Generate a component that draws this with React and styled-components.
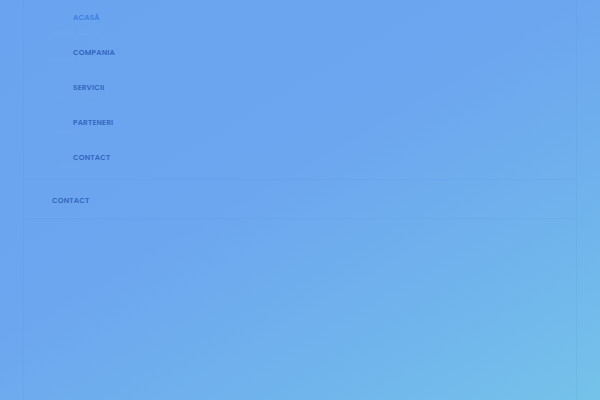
import React from "react";
import styled, { createGlobalStyle } from "styled-components";

const Global = createGlobalStyle`
  html, body { margin: 0; padding: 0; }
  body {
    width: 600px;
    height: 400px;
    overflow: hidden;
    background: linear-gradient(150deg, #6aa3ef 0%, #6ca6ef 45%, #70b4ec 75%, #74c2ea 100%);
    font-family: "Poppins", "Inter", "Open Sans", sans-serif;
  }
`;

const Page = styled.div`
  width: 600px;
  height: 400px;
  padding: 0 23px;
  box-sizing: border-box;
`;

const Panel = styled.div`
  position: relative;
  height: 400px;
  border-left: 1px solid rgba(60, 110, 200, 0.07);
  border-right: 1px solid rgba(60, 110, 200, 0.07);
  box-sizing: border-box;
`;

const SubMenu = styled.ul`
  list-style: none;
  margin: 0;
  padding: 0 0 4px 49px;
  border-bottom: 1px solid rgba(60, 110, 200, 0.06);
`;

const SubItem = styled.li`
  height: 35px;
  box-sizing: border-box;
  padding-top: 12.5px;
  line-height: 10px;
  font-size: 7.4px;
  font-weight: 600;
  letter-spacing: 0.15px;
  text-transform: uppercase;
  color: ${(p) => (p.$active ? "#3d80e3" : "#3366c0")};
`;

const TopItem = styled.div`
  height: 39px;
  box-sizing: border-box;
  padding: 16px 0 0 28px;
  line-height: 10px;
  font-size: 7.4px;
  font-weight: 600;
  letter-spacing: 0.15px;
  color: #3366c0;
  border-bottom: 1px solid rgba(60, 110, 200, 0.06);
`;

const Ghost = styled.span`
  position: absolute;
  left: 28px;
  top: ${(p) => p.$top}px;
  font-size: 6px;
  line-height: 6px;
  color: rgba(255, 255, 255, 0.07);
  letter-spacing: 0.5px;
  pointer-events: none;
`;

const items = ["Acasă", "Compania", "Servicii", "Parteneri", "Contact"];
const ghosts = [
  { t: 30, s: "ACASĂ ACASĂ" },
  { t: 57, s: "ACASĂ" },
  { t: 93, s: "SERVICII SERV" },
  { t: 128, s: "PARTENE" },
  { t: 163, s: "CONTACT" },
];

export default function App() {
  return (
    <>
      <Global />
      <Page>
        <Panel>
          <SubMenu>
            {items.map((it, i) => (
              <SubItem key={it} $active={i === 0}>
                {it}
              </SubItem>
            ))}
          </SubMenu>
          <TopItem>CONTACT</TopItem>
          {ghosts.map((g) => (
            <Ghost key={g.t} $top={g.t}>
              {g.s}
            </Ghost>
          ))}
        </Panel>
      </Page>
    </>
  );
}
